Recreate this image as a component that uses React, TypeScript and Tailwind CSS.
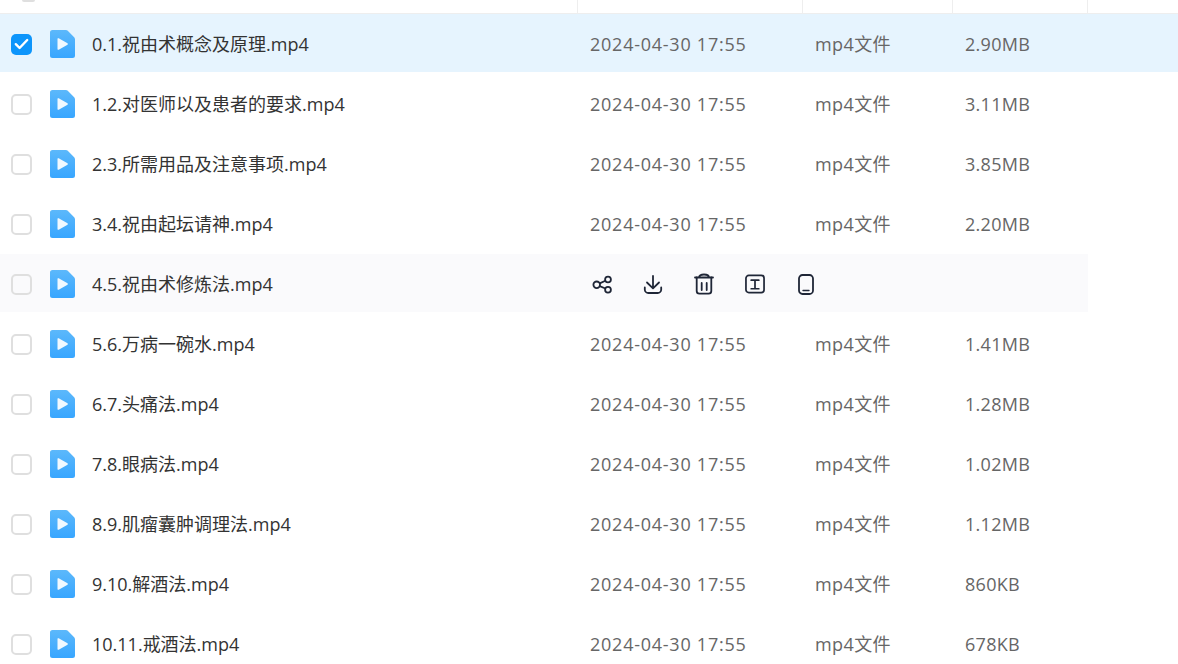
interface FileRow {
  name: string;
  size: string;
}

const files: FileRow[] = [
  { name: "0.1.祝由术概念及原理.mp4", size: "2.90MB" },
  { name: "1.2.对医师以及患者的要求.mp4", size: "3.11MB" },
  { name: "2.3.所需用品及注意事项.mp4", size: "3.85MB" },
  { name: "3.4.祝由起坛请神.mp4", size: "2.20MB" },
  { name: "4.5.祝由术修炼法.mp4", size: "" },
  { name: "5.6.万病一碗水.mp4", size: "1.41MB" },
  { name: "6.7.头痛法.mp4", size: "1.28MB" },
  { name: "7.8.眼病法.mp4", size: "1.02MB" },
  { name: "8.9.肌瘤囊肿调理法.mp4", size: "1.12MB" },
  { name: "9.10.解酒法.mp4", size: "860KB" },
  { name: "10.11.戒酒法.mp4", size: "678KB" },
];

const FileIcon = () => (
  <svg width="25" height="28" viewBox="0 0 25 28" className="block">
    <defs>
      <linearGradient id="fileGrad" x1="0" y1="0" x2="0" y2="1">
        <stop offset="0" stopColor="#5cb8fb" />
        <stop offset="1" stopColor="#38a6ff" />
      </linearGradient>
    </defs>
    <path d="M2.500 0H16l1.500.6 6.900 6.900.6 1.500V25.500a2.500 2.500 0 0 1-2.500 2.500H2.500A2.500 2.500 0 0 1 0 25.500V2.500A2.500 2.500 0 0 1 2.500 0Z" fill="url(#fileGrad)" />
    <path d="M7.500 9a.8.8 0 0 1 1.200-.7l8.800 5a.9.9 0 0 1 0 1.400l-8.800 5a.8.8 0 0 1-1.200-.7Z" fill="#fff" fillOpacity="0.92" />
  </svg>
);

const ActionIcons = () => (
  <div className="flex items-center gap-[31px] pl-[2px] text-[#1f2637]">
    <svg width="20" height="20" viewBox="0 0 20 20" fill="none" stroke="currentColor" strokeWidth="1.800">
      <circle cx="4.700" cy="10.800" r="3.300" />
      <circle cx="16" cy="5.500" r="2.900" />
      <circle cx="16" cy="15.700" r="2.900" />
      <path d="M7.700 9.400 13.400 6.800M7.700 12.200l5.700 2.300" />
    </svg>
    <svg width="20" height="20" viewBox="0 0 20 20" fill="none" stroke="currentColor" strokeWidth="1.800" strokeLinecap="round" strokeLinejoin="round">
      <path d="M10 2v12M4 8.500l6 5.800 6-5.800" />
      <path d="M1.800 13.500v2a3.500 3.500 0 0 0 3.500 3.500h9.400a3.500 3.500 0 0 0 3.500-3.500v-2" />
    </svg>
    <svg width="20" height="22" viewBox="0 0 20 22" fill="none" stroke="currentColor" strokeWidth="1.800" strokeLinecap="round" strokeLinejoin="round">
      <path d="M1 4.500h18M5 4.500c0-2 1.800-3 5-3s5 1 5 3" />
      <path d="M2.700 4.500V18a2.700 2.700 0 0 0 2.700 2.700h9.200a2.700 2.700 0 0 0 2.700-2.700V4.500" />
      <path d="M7.700 10v7M12.700 10v7" />
    </svg>
    <svg width="20" height="20" viewBox="0 0 21 20" fill="none" stroke="currentColor" strokeWidth="1.800" strokeLinecap="round">
      <rect x="1" y="1" width="19" height="18" rx="3" />
      <path d="M6.500 6h8M6.500 15h8M10.500 6v9" />
    </svg>
    <div className="flex w-[20px] justify-center">
      <svg width="16" height="21" viewBox="0 0 16 21" fill="none" stroke="currentColor" strokeWidth="1.800" strokeLinecap="round">
        <rect x="1" y="1" width="14" height="19" rx="3.500" />
        <path d="M5 16.500h6" strokeWidth="1.400" />
      </svg>
    </div>
  </div>
);

const Checkbox = ({ checked }: { checked: boolean }) =>
  checked ? (
    <div className="flex h-[21px] w-[21px] items-center justify-center rounded-[5px] bg-[#0d95fb]">
      <svg width="15" height="12" viewBox="0 0 15 12" fill="none" stroke="#fff" strokeWidth="2.400" strokeLinecap="round" strokeLinejoin="round">
        <path d="M1.800 6.200 5.600 10 13.200 2" />
      </svg>
    </div>
  ) : (
    <div className="h-[21px] w-[21px] rounded-[5px] border-2 border-[#dfdfdf]" />
  );

const Row = ({ file, index }: { file: FileRow; index: number }) => {
  const selected = index === 0;
  const hovered = index === 4;
  return (
    <div
      className={`flex h-[60px] items-center border-b-2 border-white pt-[2px] ${selected ? "w-full bg-[#e6f4fe]" : ""} ${hovered ? "w-[1088px] bg-[#fafafc]" : ""}`}
    >
      <div className="ml-[11px] w-[39px] shrink-0">
        <Checkbox checked={selected} />
      </div>
      <div className="w-[42px] shrink-0">
        <FileIcon />
      </div>
      <div className="w-[498px] shrink-0 text-[18px] text-[#333333]">{file.name}</div>
      {hovered ? (
        <ActionIcons />
      ) : (
        <>
          <div className="w-[225px] shrink-0 text-[18px] tracking-[0.75px] text-[#666666]">2024-04-30 17:55</div>
          <div className="w-[150px] shrink-0 text-[18px] tracking-[0.4px] text-[#666666]">mp4文件</div>
          <div className="text-[18px] tracking-[0.3px] text-[#666666]">{file.size}</div>
        </>
      )}
    </div>
  );
};

export default function App() {
  return (
    <div className="h-[664px] w-[1178px] overflow-hidden bg-white font-['Open_Sans','Noto_Sans_CJK_SC',sans-serif]">
      {/* table header is scrolled almost out of view, only its bottom edge shows */}
      <div className="flex h-[14px] overflow-hidden border-b border-[#eeeeee]">
        <div className="w-[578px] border-r border-[#eeeeee]">
          <div className="ml-[22px] h-[2px] w-[13px] rounded-b-[2px] bg-[#dfdfdf]" />
        </div>
        <div className="w-[225px] border-r border-[#eeeeee]" />
        <div className="w-[150px] border-r border-[#eeeeee]">
          <div className="-mt-[23px] pl-[12px] text-[18px] leading-[28px] text-[#666666]">类</div>
        </div>
        <div className="w-[135px] border-r border-[#eeeeee]" />
      </div>
      {files.map((file, index) => (
        <Row key={file.name} file={file} index={index} />
      ))}
    </div>
  );
}
